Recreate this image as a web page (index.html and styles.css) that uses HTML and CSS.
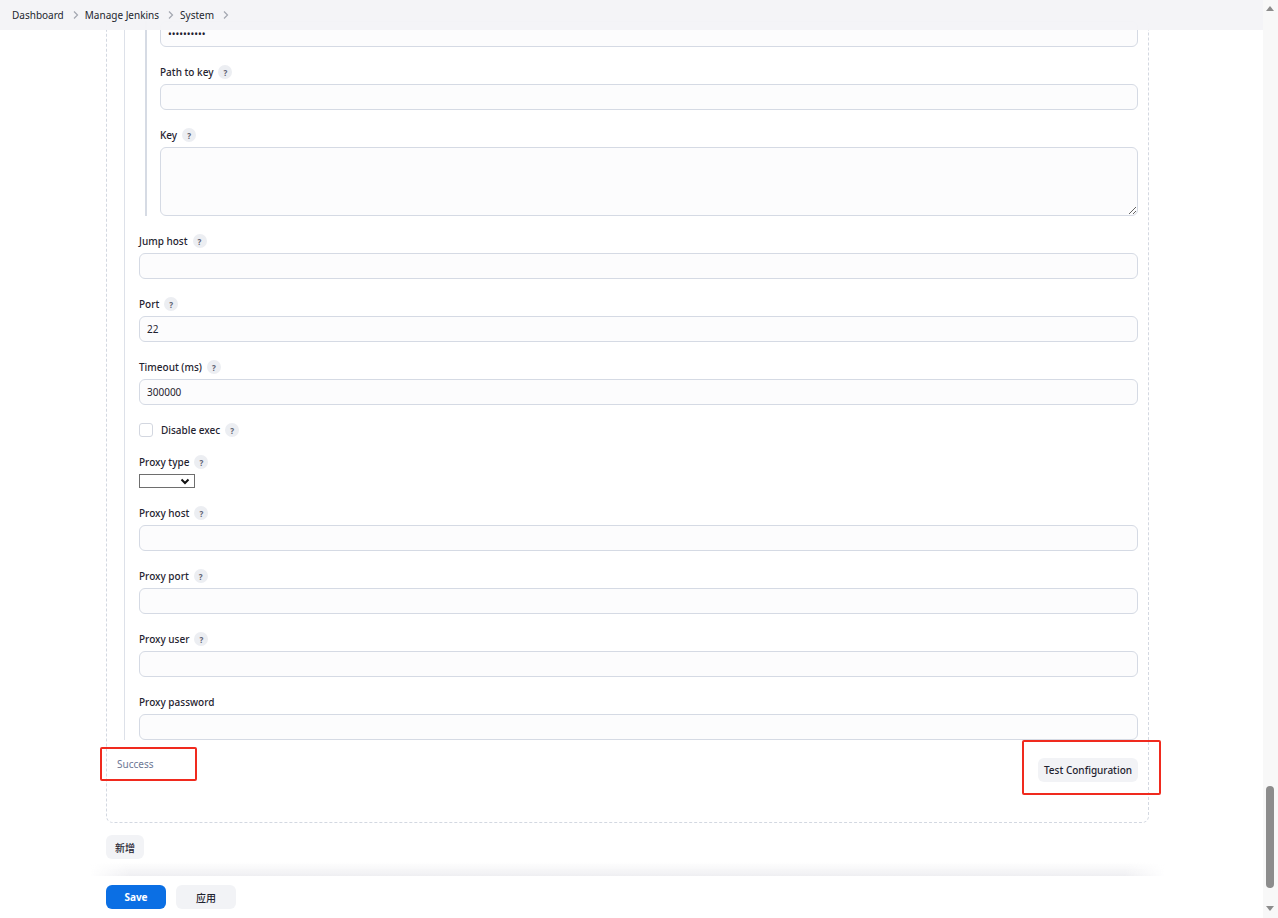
FILE: index.html
```html
<!DOCTYPE html>
<html lang="zh-CN">
<head>
    <meta charset="UTF-8">
    <title>System - Jenkins</title>
    <link rel="stylesheet" href="styles.css">
</head>
<body>
    <div class="page">
        <div class="main">
            <nav class="breadcrumbs">
                <span class="crumb">Dashboard</span>
                <span class="sep"><svg width="8" height="10" viewBox="0 0 8 10"><path d="M2 1.5 L5.5 5 L2 8.5" fill="none" stroke="#a3a7b0" stroke-width="1.2"/></svg></span>
                <span class="crumb">Manage Jenkins</span>
                <span class="sep"><svg width="8" height="10" viewBox="0 0 8 10"><path d="M2 1.5 L5.5 5 L2 8.5" fill="none" stroke="#a3a7b0" stroke-width="1.2"/></svg></span>
                <span class="crumb">System</span>
                <span class="sep"><svg width="8" height="10" viewBox="0 0 8 10"><path d="M2 1.5 L5.5 5 L2 8.5" fill="none" stroke="#a3a7b0" stroke-width="1.2"/></svg></span>
            </nav>

            <div class="content">
                <div class="dashed-box">
                    <div class="chunk">
                        <div class="nested">
                            <input class="field-input first" type="password" value="1234567890">
                            <div class="field">
                                <div class="label">Path to key <span class="help">?</span></div>
                                <input class="field-input" type="text">
                            </div>
                            <div class="field">
                                <div class="label">Key <span class="help">?</span></div>
                                <textarea class="field-input area"></textarea>
                            </div>
                        </div>

                        <div class="field">
                            <div class="label">Jump host <span class="help">?</span></div>
                            <input class="field-input" type="text">
                        </div>
                        <div class="field">
                            <div class="label">Port <span class="help">?</span></div>
                            <input class="field-input" type="text" value="22">
                        </div>
                        <div class="field">
                            <div class="label">Timeout (ms) <span class="help">?</span></div>
                            <input class="field-input" type="text" value="300000">
                        </div>
                        <div class="field check-row">
                            <span class="checkbox"></span>
                            <span class="check-label">Disable exec</span>
                            <span class="help">?</span>
                        </div>
                        <div class="field select-field">
                            <div class="label">Proxy type <span class="help">?</span></div>
                            <span class="select"><svg width="10" height="7" viewBox="0 0 10 7"><path d="M1.5 1.5 L5 5 L8.5 1.5" fill="none" stroke="#111" stroke-width="2"/></svg></span>
                        </div>
                        <div class="field">
                            <div class="label">Proxy host <span class="help">?</span></div>
                            <input class="field-input" type="text">
                        </div>
                        <div class="field">
                            <div class="label">Proxy port <span class="help">?</span></div>
                            <input class="field-input" type="text">
                        </div>
                        <div class="field">
                            <div class="label">Proxy user <span class="help">?</span></div>
                            <input class="field-input" type="text">
                        </div>
                        <div class="field">
                            <div class="label">Proxy password</div>
                            <input class="field-input" type="password">
                        </div>
                    </div>

                    <div class="test-row">
                        <span class="marked">
                            <span class="success">Success</span>
                            <span class="red-mark mark-success"></span>
                        </span>
                        <span class="marked">
                            <button class="btn test-btn">Test Configuration</button>
                            <span class="red-mark mark-test"></span>
                        </span>
                    </div>
                </div>

                <button class="btn add-btn">新增</button>
            </div>

            <div class="bottom-bar">
                <div class="bar-fade"></div>
                <div class="bar-buttons">
                    <button class="btn primary">Save</button>
                    <button class="btn apply">应用</button>
                </div>
            </div>
        </div>

        <div class="scrollbar">
            <span class="arrow up"></span>
            <span class="thumb"></span>
            <span class="arrow down"></span>
        </div>
    </div>
</body>
</html>
```

FILE: styles.css
```css
html, body {
    margin: 0;
    height: 100%;
    overflow: hidden;
}
body {
    font-family: "Noto Sans", "Noto Sans CJK SC", sans-serif;
    font-size: 10px;
    color: #1f2330;
    background: white;
}
.page {
    display: flex;
    height: 918px;
}
.main {
    position: relative;
    flex: 1;
    display: flex;
    flex-direction: column;
}
.breadcrumbs {
    position: absolute;
    top: 0;
    left: 0;
    right: 0;
    height: 30px;
    display: flex;
    align-items: center;
    padding-left: 12px;
    background: rgba(244, 244, 247, 0.96);
    z-index: 5;
}
.crumb {
    color: #23262e;
}
.sep {
    display: inline-flex;
    margin: 0 5px 0 8px;
}
.content {
    padding-left: 106px;
    width: 1043px;
    flex: 1;
}
.dashed-box {
    border: 1px dashed #d3d8e1;
    border-top: none;
    border-radius: 0 0 7px 7px;
    padding: 0 10px 40px 10px;
}
.chunk {
    margin-left: 7px;
    border-left: 1px solid #dde1e9;
    padding-left: 14px;
}
.nested {
    margin-left: 6px;
    border-left: 2px solid #d6dbe4;
    padding-left: 13px;
    margin-bottom: 18px;
}
.field {
    margin-top: 18px;
}
.label {
    display: flex;
    align-items: center;
    height: 14px;
    margin-bottom: 5px;
    font-weight: 500;
}
.help {
    display: inline-flex;
    align-items: center;
    justify-content: center;
    width: 14px;
    height: 14px;
    border-radius: 50%;
    background: #eceef2;
    color: #5d6170;
    font-size: 8px;
    font-weight: 700;
    margin-left: 5px;
}
.field-input {
    display: block;
    width: 100%;
    box-sizing: border-box;
    height: 26px;
    border: 1px solid #d5dae4;
    border-radius: 6px;
    background: #fcfcfd;
    padding: 0 7px;
    font-family: inherit;
    font-size: 10px;
    color: #1f2330;
    outline: none;
}
.field-input.first {
    margin-top: 21px;
}
.field-input.area {
    height: 69px;
    resize: vertical;
}
.check-row {
    display: flex;
    align-items: center;
    height: 14px;
    font-weight: 500;
}
.checkbox {
    width: 12px;
    height: 12px;
    border: 1px solid #d3d7e0;
    border-radius: 3px;
    background: white;
    margin-right: 8px;
}
.select-field {
    margin-bottom: 1px;
}
.select {
    display: flex;
    justify-content: flex-end;
    align-items: center;
    box-sizing: border-box;
    width: 56px;
    height: 14px;
    border: 1px solid #6e6e6e;
    padding-right: 4px;
    background: white;
}
.test-row {
    display: flex;
    justify-content: space-between;
    align-items: flex-start;
    margin-top: 18px;
}
.marked {
    position: relative;
    display: inline-flex;
}
.success {
    color: #6c7794;
    line-height: 13px;
}
.red-mark {
    position: absolute;
    border: 2px solid #f02a1e;
    border-radius: 2px;
    box-sizing: border-box;
}
.mark-success {
    left: -17px;
    top: -11px;
    width: 97px;
    height: 34px;
}
.mark-test {
    right: -23px;
    top: -18px;
    width: 139px;
    height: 55px;
}
.btn {
    font-family: inherit;
    font-size: 10px;
    color: #1f2330;
    background: #f2f3f6;
    border: none;
    border-radius: 6px;
    height: 24px;
    padding: 0 8px;
    font-weight: 500;
}
.test-btn {
    width: 100px;
    padding: 0;
}
.add-btn {
    display: block;
    margin-top: 12px;
    width: 38px;
    padding: 0;
}
.bottom-bar {
    display: flex;
    flex-direction: column;
}
.bar-fade {
    height: 14px;
    margin: 0 98px 0 90px;
    background: linear-gradient(to bottom, rgba(240, 240, 243, 0), #efeff2);
    -webkit-mask-image: linear-gradient(to right, transparent, black 40px, black calc(100% - 40px), transparent);
}
.bar-buttons {
    display: flex;
    gap: 10px;
    padding: 9px 0 9px 106px;
}
.bar-buttons .btn {
    width: 60px;
    padding: 0;
}
.btn.primary {
    background: #0b6fe4;
    color: white;
    font-weight: 700;
}
.scrollbar {
    position: relative;
    width: 15px;
    background: #f8f8f8;
}
.thumb {
    position: absolute;
    left: 3px;
    top: 786px;
    width: 8px;
    height: 102px;
    border-radius: 4px;
    background: #8c8c8c;
}
.arrow {
    position: absolute;
    left: 3px;
    width: 0;
    height: 0;
    border-left: 4px solid transparent;
    border-right: 4px solid transparent;
}
.arrow.up {
    top: 6px;
    border-bottom: 5px solid #8c8c8c;
}
.arrow.down {
    top: 906px;
    border-top: 5px solid #8c8c8c;
}
```
